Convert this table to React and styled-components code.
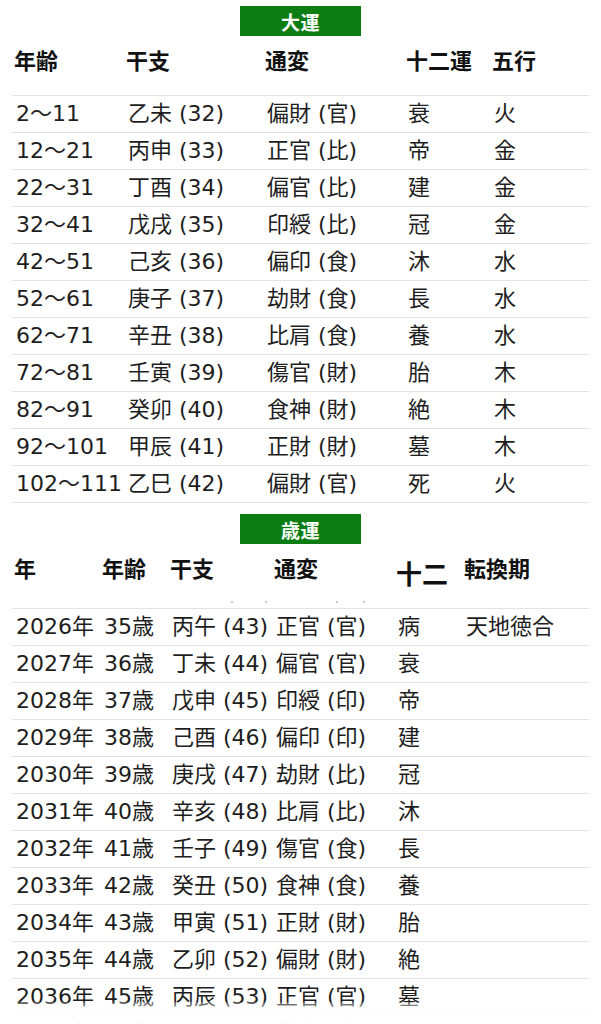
import React from "react";
import styled, { createGlobalStyle } from "styled-components";

const GlobalStyle = createGlobalStyle`
  html, body {
    margin: 0;
    padding: 0;
    background: #ffffff;
  }
  body {
    font-family: "DejaVu Sans", "Noto Sans CJK JP", sans-serif;
    color: #1c1c1c;
  }
`;

const Page = styled.div`
  position: relative;
  height: 1024px;
  overflow: hidden;
  padding: 6px 12px 0 12px;
  box-sizing: border-box;
`;

const Badge = styled.div`
  width: 121px;
  height: 30px;
  margin: ${(p) => (p.$top ? `${p.$top}px` : "0")} auto 0 auto;
  background: #0b7d13;
  color: #ffffff;
  font-family: "Noto Sans CJK JP", sans-serif;
  font-weight: 700;
  font-size: 19px;
  display: flex;
  align-items: center;
  justify-content: center;
  letter-spacing: 0.5px;
`;

const Grid = styled.div`
  display: grid;
  grid-template-columns: ${(p) => p.$cols};
  box-sizing: border-box;
`;

const HeadRow = styled(Grid)`
  position: relative;
  height: ${(p) => p.$h}px;
  padding-top: ${(p) => p.$pt}px;
  padding-left: 2px;
  border-bottom: 1px solid #e3e3e3;
  align-items: start;
`;

const HeadCell = styled.div`
  font-family: "Noto Sans CJK JP", sans-serif;
  font-weight: 700;
  font-size: ${(p) => (p.$big ? 26 : 22)}px;
  line-height: 22px;
  margin-top: ${(p) => (p.$big ? 6 : 0)}px;
  color: #111111;
  white-space: nowrap;
`;

const Row = styled(Grid)`
  height: 37px;
  padding-left: 4px;
  border-bottom: 1px solid #e3e3e3;
  align-items: center;
`;

const Cell = styled.div`
  font-size: 22px;
  line-height: 36px;
  color: #1e1e1e;
  white-space: nowrap;
  overflow: visible;
`;

const Dots = styled.div`
  position: absolute;
  left: 0;
  bottom: 5px;
  width: 100%;
  height: 2px;
`;

const Dot = styled.span`
  position: absolute;
  top: 0;
  width: 2px;
  height: 2px;
  border-radius: 1px;
  background: #b9b9b9;
`;

const Fade = styled.div`
  position: absolute;
  left: 0;
  right: 0;
  bottom: 0;
  height: 22px;
  background: linear-gradient(
    to bottom,
    rgba(255, 255, 255, 0.2) 0%,
    rgba(255, 255, 255, 0.85) 45%,
    rgba(255, 255, 255, 0.95) 100%
  );
  pointer-events: none;
`;

const TAIUN_COLS = "112px 139px 141px 86px 1fr";
const SAIUN_COLS = "88px 68px 104px 122px 68px 1fr";

const taiun = [
  ["2〜11", "乙未 (32)", "偏財 (官)", "衰", "火"],
  ["12〜21", "丙申 (33)", "正官 (比)", "帝", "金"],
  ["22〜31", "丁酉 (34)", "偏官 (比)", "建", "金"],
  ["32〜41", "戊戌 (35)", "印綬 (比)", "冠", "金"],
  ["42〜51", "己亥 (36)", "偏印 (食)", "沐", "水"],
  ["52〜61", "庚子 (37)", "劫財 (食)", "長", "水"],
  ["62〜71", "辛丑 (38)", "比肩 (食)", "養", "水"],
  ["72〜81", "壬寅 (39)", "傷官 (財)", "胎", "木"],
  ["82〜91", "癸卯 (40)", "食神 (財)", "絶", "木"],
  ["92〜101", "甲辰 (41)", "正財 (財)", "墓", "木"],
  ["102〜111", "乙巳 (42)", "偏財 (官)", "死", "火"],
];

const saiun = [
  ["2026年", "35歳", "丙午 (43)", "正官 (官)", "病", "天地徳合"],
  ["2027年", "36歳", "丁未 (44)", "偏官 (官)", "衰", ""],
  ["2028年", "37歳", "戊申 (45)", "印綬 (印)", "帝", ""],
  ["2029年", "38歳", "己酉 (46)", "偏印 (印)", "建", ""],
  ["2030年", "39歳", "庚戌 (47)", "劫財 (比)", "冠", ""],
  ["2031年", "40歳", "辛亥 (48)", "比肩 (比)", "沐", ""],
  ["2032年", "41歳", "壬子 (49)", "傷官 (食)", "長", ""],
  ["2033年", "42歳", "癸丑 (50)", "食神 (食)", "養", ""],
  ["2034年", "43歳", "甲寅 (51)", "正財 (財)", "胎", ""],
  ["2035年", "44歳", "乙卯 (52)", "偏財 (財)", "絶", ""],
  ["2036年", "45歳", "丙辰 (53)", "正官 (官)", "墓", ""],
  ["2037年", "46歳", "丁巳 (54)", "偏官 (官)", "死", ""],
];

export default function App() {
  return (
    <>
      <GlobalStyle />
      <Page>
        <Badge>大運</Badge>
        <HeadRow $cols={TAIUN_COLS} $h={60} $pt={12}>
          <HeadCell>年齢</HeadCell>
          <HeadCell>干支</HeadCell>
          <HeadCell>通変</HeadCell>
          <HeadCell>十二運</HeadCell>
          <HeadCell>五行</HeadCell>
        </HeadRow>
        {taiun.map((r) => (
          <Row key={r[0]} $cols={TAIUN_COLS}>
            {r.map((c, i) => (
              <Cell key={i}>{c}</Cell>
            ))}
          </Row>
        ))}

        <Badge $top={11}>歳運</Badge>
        <HeadRow $cols={SAIUN_COLS} $h={65} $pt={12}>
          <HeadCell>年</HeadCell>
          <HeadCell>年齢</HeadCell>
          <HeadCell>干支</HeadCell>
          <HeadCell>通変</HeadCell>
          <HeadCell $big>十二</HeadCell>
          <HeadCell>転換期</HeadCell>
          <Dots>
            <Dot style={{ left: 219 }} />
            <Dot style={{ left: 253 }} />
            <Dot style={{ left: 324 }} />
            <Dot style={{ left: 351 }} />
          </Dots>
        </HeadRow>
        {saiun.map((r) => (
          <Row key={r[0]} $cols={SAIUN_COLS}>
            {r.map((c, i) => (
              <Cell key={i}>{c}</Cell>
            ))}
          </Row>
        ))}
        <Fade />
      </Page>
    </>
  );
}
